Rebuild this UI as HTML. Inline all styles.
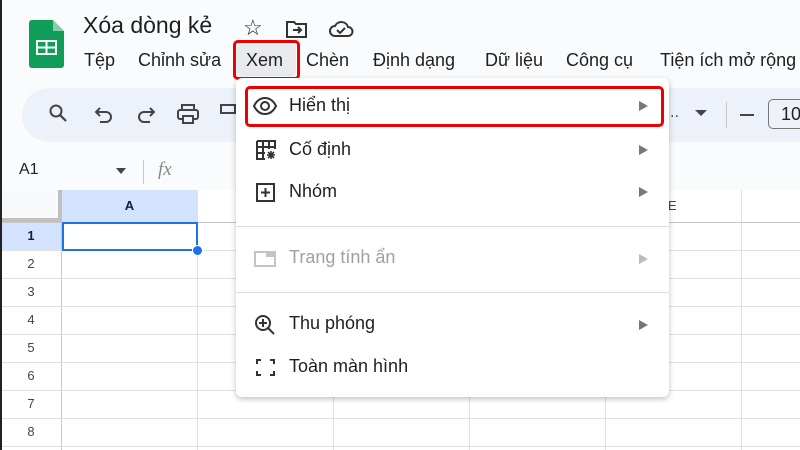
<!DOCTYPE html>
<html><head><meta charset="utf-8"><style>
*{margin:0;padding:0;box-sizing:border-box}
body{width:800px;height:450px;overflow:hidden;background:#f9fbfd;font-family:"Liberation Sans",Arial,sans-serif;color:#1f1f1f;position:relative}
.abs{position:absolute}
.menu span{position:absolute;top:50px;font-size:18px}
.grid{position:absolute;left:0;top:190px;width:800px;height:260px;background:#fff}
.vl{position:absolute;top:0;width:1px;height:260px;background:#e1e1e1}
.hl{position:absolute;left:0;width:800px;height:1px;background:#e1e1e1}
.rn{position:absolute;left:0;width:62px;text-align:center;font-size:13px;color:#444}
.mi{position:absolute;left:289px;font-size:18px;color:#1f1f1f}
.arr{position:absolute;left:639px;width:0;height:0;border-left:9px solid #777;border-top:5px solid transparent;border-bottom:5px solid transparent}
</style></head><body>
<!-- logo -->
<svg class="abs" style="left:29px;top:20px" width="35" height="48" viewBox="0 0 35 48"><path d="M3 0h21l11 11v34a3 3 0 0 1-3 3H3a3 3 0 0 1-3-3V3a3 3 0 0 1 3-3z" fill="#0f9d58"/><path d="M24 0v11h11z" fill="#87ceac"/><rect x="7" y="20" width="21" height="15" fill="#fff"/><rect x="9" y="22" width="7.5" height="4.5" fill="#0f9d58"/><rect x="18.5" y="22" width="7.5" height="4.5" fill="#0f9d58"/><rect x="9" y="28.5" width="7.5" height="4.5" fill="#0f9d58"/><rect x="18.5" y="28.5" width="7.5" height="4.5" fill="#0f9d58"/></svg>
<div class="abs" style="left:83px;top:12px;font-size:23px">Xóa dòng kẻ</div>
<div class="abs" style="left:243px;top:15px;font-size:22px">☆</div>
<svg class="abs" style="left:286px;top:20px" width="22" height="18" viewBox="0 0 22 18"><path d="M1 2h7l2 2h10v13H1z" fill="none" stroke="#333" stroke-width="2"/><path d="M7 10h8M12 7l3 3-3 3" fill="none" stroke="#333" stroke-width="2"/></svg>
<svg class="abs" style="left:328px;top:18px" width="26" height="20" viewBox="0 0 26 20"><path d="M7 18a5 5 0 0 1 0-10 7 7 0 0 1 13 1 4.5 4.5 0 0 1 0 9z" fill="none" stroke="#333" stroke-width="2"/><path d="M9 12l3 3 5-5" fill="none" stroke="#333" stroke-width="2"/></svg>
<div class="menu">
<span style="left:84px">Tệp</span><span style="left:138px">Chỉnh sửa</span>
<div class="abs" style="left:237px;top:45px;width:59px;height:31px;background:#e8eaed;border-radius:4px"></div>
<span style="left:246px">Xem</span><span style="left:306px">Chèn</span><span style="left:373px">Định dạng</span><span style="left:485px">Dữ liệu</span><span style="left:566px">Công cụ</span><span style="left:660px;white-space:nowrap">Tiện ích mở rộng</span>
</div>
<div class="abs" style="left:233px;top:40px;width:67px;height:40px;border:3px solid #e00;border-radius:5px"></div>
<!-- toolbar -->
<div class="abs" style="left:22px;top:88px;width:800px;height:54px;background:#edf2fa;border-radius:27px"></div>
<svg class="abs" style="left:48px;top:103px" width="20" height="20" viewBox="0 0 20 20"><circle cx="8" cy="8" r="5.5" fill="none" stroke="#444" stroke-width="2"/><path d="M12 12l6 6" stroke="#444" stroke-width="2.2"/></svg>
<svg class="abs" style="left:95px;top:106px" width="18" height="18" viewBox="0 0 18 18"><path d="M5 2L1 6l4 4M1 6h10a5 5 0 0 1 0 10H5" fill="none" stroke="#444" stroke-width="2"/></svg>
<svg class="abs" style="left:137px;top:106px" width="18" height="18" viewBox="0 0 18 18"><path d="M13 2l4 4-4 4M17 6H7a5 5 0 0 0 0 10h6" fill="none" stroke="#444" stroke-width="2"/></svg>
<svg class="abs" style="left:177px;top:104px" width="22" height="20" viewBox="0 0 22 20"><rect x="5" y="1" width="12" height="5" fill="none" stroke="#444" stroke-width="2"/><rect x="1" y="6" width="20" height="9" rx="2" fill="none" stroke="#444" stroke-width="2"/><rect x="6" y="12" width="10" height="7" fill="#edf2fa" stroke="#444" stroke-width="2"/></svg>
<div class="abs" style="left:220px;top:104px;width:16px;height:10px;border:2px solid #444"></div>
<div class="abs" style="left:670px;top:104px;font-size:16px;color:#444">..</div>
<div class="abs" style="left:695px;top:110px;border-top:6px solid #444;border-left:6px solid transparent;border-right:6px solid transparent"></div>
<div class="abs" style="left:726px;top:102px;width:1px;height:26px;background:#c7c7c7"></div>
<div class="abs" style="left:740px;top:114px;width:14px;height:2px;background:#444"></div>
<div class="abs" style="left:768px;top:99px;width:40px;height:30px;border:1px solid #777;border-radius:5px;font-size:18px;padding:4px 0 0 12px">10</div>
<!-- formula bar -->
<div class="abs" style="left:19px;top:161px;font-size:16px">A1</div>
<div class="abs" style="left:116px;top:168px;border-top:6px solid #444;border-left:5px solid transparent;border-right:5px solid transparent"></div>
<div class="abs" style="left:143px;top:160px;width:1px;height:24px;background:#c7c7c7"></div>
<div class="abs" style="left:158px;top:159px;font-size:19px;font-style:italic;color:#888;font-family:'Liberation Serif',serif">fx</div>
<!-- grid -->
<div class="grid">
<div class="abs" style="left:0;top:0;width:62px;height:32px;background:#f8f9fa;border-right:4px solid #c0c0c0;border-bottom:4px solid #c0c0c0"></div>
<div class="abs" style="left:62px;top:0;width:135px;height:32px;background:#d3e3fd"></div>
<div class="abs" style="left:0;top:32px;width:62px;height:228px;background:#fff;border-right:1px solid #c7c7c7"></div>
<div class="abs" style="left:0;top:32px;width:61px;height:28px;background:#d3e3fd"></div>
<div class="vl" style="left:197px"></div><div class="vl" style="left:333px"></div><div class="vl" style="left:469px"></div><div class="vl" style="left:605px"></div><div class="vl" style="left:741px"></div>
<div class="hl" style="top:32px;background:#c7c7c7"></div><div class="hl" style="top:60px"></div><div class="hl" style="top:88px"></div><div class="hl" style="top:116px"></div><div class="hl" style="top:144px"></div><div class="hl" style="top:172px"></div><div class="hl" style="top:200px"></div><div class="hl" style="top:228px"></div><div class="hl" style="top:256px"></div>
<div class="abs" style="left:62px;top:0;width:135px;text-align:center;font-size:13px;font-weight:bold;color:#0b1e4a;line-height:32px">A</div>
<div class="abs" style="left:668px;top:0;font-size:13px;color:#444;line-height:32px">E</div>
<div class="rn" style="top:38px;font-weight:bold;color:#0b1e4a">1</div><div class="rn" style="top:66px">2</div><div class="rn" style="top:94px">3</div><div class="rn" style="top:122px">4</div><div class="rn" style="top:150px">5</div><div class="rn" style="top:178px">6</div><div class="rn" style="top:206px">7</div><div class="rn" style="top:234px">8</div>
<div class="abs" style="left:62px;top:32px;width:136px;height:29px;border:2px solid #1a73e8"></div>
<div class="abs" style="left:192px;top:55px;width:11px;height:11px;border-radius:50%;background:#1a73e8;border:1px solid #fff"></div>
</div>
<div class="abs" style="left:0;top:0;width:2px;height:450px;background:#222"></div>
<!-- dropdown -->
<div class="abs" style="left:236px;top:78px;width:433px;height:319px;background:#fff;border-radius:6px;box-shadow:0 2px 6px rgba(0,0,0,.25)"></div>
<div class="abs" style="left:245px;top:86px;width:419px;height:41px;border:3px solid #e00;border-radius:5px"></div>
<svg class="abs" style="left:253px;top:97px" width="24" height="18" viewBox="0 0 24 18"><path d="M1 9C4 3 8 1 12 1s8 2 11 8c-3 6-7 8-11 8S4 15 1 9z" fill="none" stroke="#333" stroke-width="2"/><circle cx="12" cy="9" r="4" fill="none" stroke="#333" stroke-width="2"/></svg>
<div class="mi" style="top:95px">Hiển thị</div><div class="arr" style="top:101px"></div>
<svg class="abs" style="left:256px;top:140px" width="20" height="20" viewBox="0 0 20 20"><path d="M1 1h18v8M1 1v18h8M7 1v18M13 1v8M1 7h18M1 13h8" fill="none" stroke="#333" stroke-width="2"/><path d="M15 11v8M11 15h8M12 12l6 6M18 12l-6 6" stroke="#333" stroke-width="1.6"/></svg>
<div class="mi" style="top:139px">Cố định</div><div class="arr" style="top:145px"></div>
<svg class="abs" style="left:256px;top:183px" width="19" height="19" viewBox="0 0 19 19"><rect x="1" y="1" width="17" height="17" fill="none" stroke="#333" stroke-width="2"/><path d="M9.5 5v9M5 9.5h9" stroke="#333" stroke-width="2"/></svg>
<div class="mi" style="top:181px">Nhóm</div><div class="arr" style="top:187px"></div>
<div class="abs" style="left:236px;top:226px;width:433px;height:1px;background:#dadce0"></div>
<svg class="abs" style="left:254px;top:251px" width="22" height="16" viewBox="0 0 22 16"><rect x="1" y="1" width="20" height="14" fill="none" stroke="#c4c4c4" stroke-width="2"/><rect x="12" y="1" width="9" height="5" fill="#c4c4c4"/></svg>
<div class="mi" style="top:247px;color:#a0a0a0">Trang tính ẩn</div><div class="arr" style="top:254px;border-left-color:#bbb"></div>
<div class="abs" style="left:236px;top:292px;width:433px;height:1px;background:#dadce0"></div>
<svg class="abs" style="left:254px;top:314px" width="22" height="22" viewBox="0 0 22 22"><circle cx="9" cy="9" r="7" fill="none" stroke="#333" stroke-width="2"/><path d="M14 14l6 6M9 5v8M5 9h8" stroke="#333" stroke-width="2"/></svg>
<div class="mi" style="top:313px">Thu phóng</div><div class="arr" style="top:320px"></div>
<svg class="abs" style="left:256px;top:359px" width="19" height="17" viewBox="0 0 19 17"><path d="M1 5V1h4M14 1h4v4M18 12v4h-4M5 16H1v-4" fill="none" stroke="#333" stroke-width="2"/></svg>
<div class="mi" style="top:356px">Toàn màn hình</div>
</body></html>
